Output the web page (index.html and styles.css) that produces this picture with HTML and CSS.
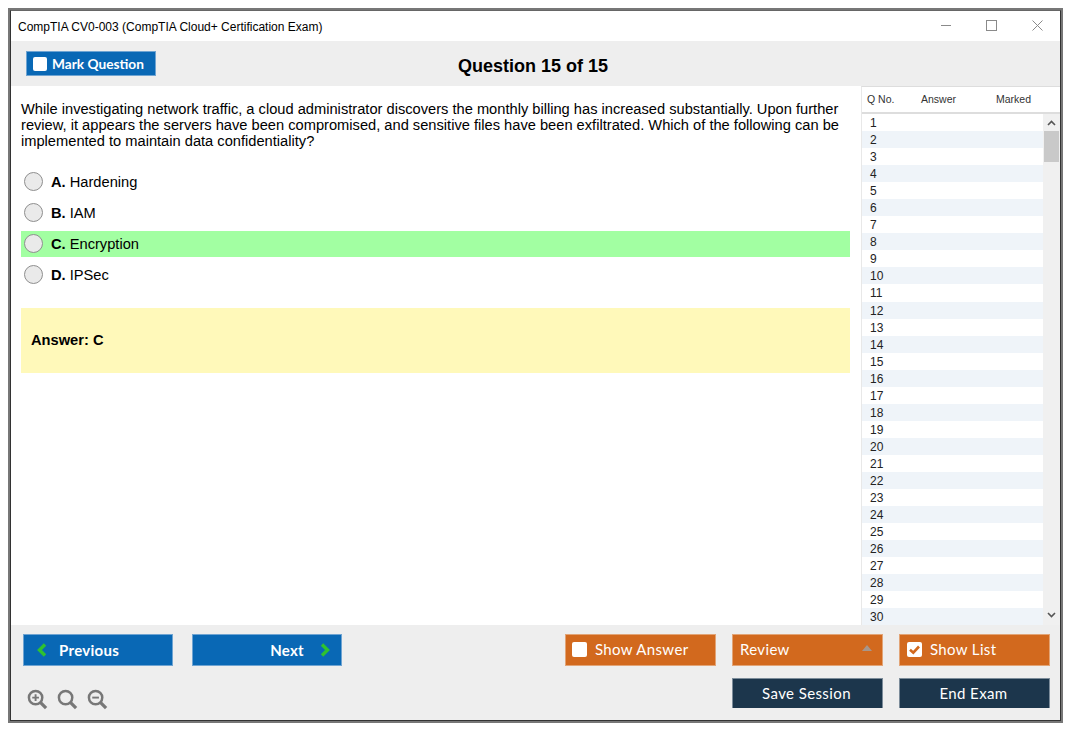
FILE: index.html
```html
<!DOCTYPE html>
<html lang="en">
<head>
<meta charset="utf-8">
<title>CompTIA CV0-003</title>
<link rel="stylesheet" href="styles.css">
</head>
<body>
<div class="window"><div class="frame">
  <header class="titlebar">
    <span class="title">CompTIA CV0-003 (CompTIA Cloud+ Certification Exam)</span>
    <div class="winctl">
      <svg class="ctl ctl-min" viewBox="0 0 10 11"><path d="M0 5.500H10" /></svg>
      <svg class="ctl" viewBox="0 0 11 11"><rect x="0.500" y="0.500" width="10" height="10" /></svg>
      <svg class="ctl" viewBox="0 0 11 11"><path d="M0.500 0.500L10.500 10.500M10.500 0.500L0.500 10.500" /></svg>
    </div>
  </header>
  <div class="toolbar">
    <button class="btn btn-blue mark"><span class="box"></span>Mark Question</button>
    <h1 class="qtitle">Question 15 of 15</h1>
  </div>
  <main class="content">
    <section class="question">
      <p class="qtext">While investigating network traffic, a cloud administrator discovers the monthly billing has increased substantially. Upon further review, it appears the servers have been compromised, and sensitive files have been exfiltrated. Which of the following can be implemented to maintain data confidentiality?</p>
      <div class="options">
        <div class="option"><span class="radio"></span><b>A.</b>&nbsp;Hardening</div>
        <div class="option"><span class="radio"></span><b>B.</b>&nbsp;IAM</div>
        <div class="option correct"><span class="radio"></span><b>C.</b>&nbsp;Encryption</div>
        <div class="option"><span class="radio"></span><b>D.</b>&nbsp;IPSec</div>
      </div>
      <div class="answer">Answer: C</div>
    </section>
    <aside class="side">
      <div class="side-head"><span class="c1">Q No.</span><span class="c2">Answer</span><span class="c3">Marked</span></div>
      <div class="side-body">
        <ol class="qlist" id="qlist"><li>1</li><li>2</li><li>3</li><li>4</li><li>5</li><li>6</li><li>7</li><li>8</li><li>9</li><li>10</li><li>11</li><li>12</li><li>13</li><li>14</li><li>15</li><li>16</li><li>17</li><li>18</li><li>19</li><li>20</li><li>21</li><li>22</li><li>23</li><li>24</li><li>25</li><li>26</li><li>27</li><li>28</li><li>29</li><li>30</li></ol>
        <div class="scrollbar">
          <svg class="arrow arrow-up" viewBox="0 0 9 6"><path d="M1 5L4.500 1.500L8 5" /></svg>
          <div class="track"><div class="thumb"></div></div>
          <svg class="arrow arrow-down" viewBox="0 0 9 6"><path d="M1 1L4.500 4.500L8 1" /></svg>
        </div>
      </div>
    </aside>
  </main>
  <footer class="footer">
    <div class="row row1">
      <button class="btn btn-blue nav prev"><svg class="chev" viewBox="0 0 10 14"><path d="M8 1.500L2.500 7L8 12.500" /></svg>Previous</button>
      <button class="btn btn-blue nav next">Next<svg class="chev" viewBox="0 0 10 14"><path d="M2 1.500L7.500 7L2 12.500" /></svg></button>
      <span class="grow"></span>
      <button class="btn btn-orange has-box"><span class="box"></span>Show Answer</button>
      <button class="btn btn-orange review">Review<span class="caret"></span></button>
      <button class="btn btn-orange show-list"><span class="box"><svg viewBox="0 0 15 15"><path d="M3 7.700L6.300 10.700L12 4.500" /></svg></span>Show List</button>
    </div>
    <div class="row row2">
      <div class="zooms">
        <svg class="zoom" viewBox="0 0 22 22"><circle cx="9" cy="9" r="7" /><path class="h" d="M14 14L20 20" /><path class="t" d="M5.500 9H12.500M9 5.500V12.500" /></svg>
        <svg class="zoom" viewBox="0 0 22 22"><circle cx="9" cy="9" r="7" /><path class="h" d="M14 14L20 20" /></svg>
        <svg class="zoom" viewBox="0 0 22 22"><circle cx="9" cy="9" r="7" /><path class="h" d="M14 14L20 20" /><path class="t" d="M5.500 9H12.500" /></svg>
      </div>
      <span class="grow"></span>
      <button class="btn btn-navy">Save Session</button>
      <button class="btn btn-navy">End Exam</button>
    </div>
  </footer>
</div></div>
</body>
</html>
```
FILE: styles.css
```css
* { box-sizing: border-box; }
html, body { margin: 0; padding: 0; background: #fff; }
body { padding: 8px 0 0 8px; font-family: "Liberation Sans", Arial, sans-serif; color: #000; }
.window { width: 1055px; height: 715px; border: 2px solid #777; }
.frame { height: 100%; border: 1px solid #333; border-top-color: #666; display: flex; flex-direction: column; background: #fff; }

.titlebar { height: 30px; flex: none; display: flex; align-items: center; justify-content: space-between; padding-left: 7px; background: #fff; }
.title { font-size: 12px; margin-top: 2px; }
.winctl { display: flex; gap: 35px; padding-right: 17px; margin-top: -1px; }
.ctl { width: 11px; height: 11px; fill: none; stroke: #8a8a8a; stroke-width: 1; }
.ctl-min { width: 10px; }

.toolbar { height: 45px; flex: none; background: #eee; display: flex; align-items: center; padding-left: 15px; }
.qtitle { margin: 0 0 0 302px; font-size: 18px; font-weight: bold; line-height: 22px; padding-top: 4px; height: 26px; }

.btn { border: 1px solid #8fb4d8; font-family: Lato, "Open Sans", sans-serif; color: #fff; display: flex; align-items: center; padding: 0; cursor: pointer; }
.btn-blue { background: #0968b5; border-color: #6fa4d2; font-weight: bold; }
.btn-orange { background: #d2691e; border-color: #e2a476; width: 151px; height: 32px; font-size: 15px; letter-spacing: 0.35px; padding: 0 0 2px 7px; }
.btn-orange.has-box { padding-left: 6px; }
.btn-navy { background: #1c364c; border-color: #7c8c9a; border-bottom: 0; width: 151px; height: 30px; font-size: 15px; letter-spacing: 0.4px; justify-content: center; padding: 0 2px 1px 0; }
.box { width: 15px; height: 15px; background: #fff; border-radius: 2px; margin-right: 8px; flex: none; display: block; }
.box svg { display: block; width: 15px; height: 15px; fill: none; stroke: #d2691e; stroke-width: 2.6; }

.mark { width: 130px; height: 25px; font-size: 13.700px; padding-left: 6px; }
.mark .box { width: 14px; height: 14px; margin-right: 5px; }

.content { flex: 1; min-height: 0; display: flex; background: #fff; }
.question { flex: 1; min-width: 0; padding: 15px 11px 0 10px; }
.qtext { margin: 0 0 20px; font-size: 14.670px; line-height: 16px; }
.options { display: flex; flex-direction: column; gap: 5px; }
.option { height: 26px; display: flex; align-items: center; font-size: 14.670px; padding-left: 3px; }
.correct { background: #a2ffa2; }
.radio { width: 19px; height: 19px; border-radius: 50%; background: #eaeaea; border: 1px solid #8f8f8f; margin: 0 8px 1px 0; flex: none; }
.answer { margin-top: 20px; height: 65px; background: #fff9ba; display: flex; align-items: center; padding: 0 0 2px 10px; font-size: 14.670px; font-weight: bold; }

.side { width: 199px; flex: none; display: flex; flex-direction: column; border-left: 1px solid #e8e8e8; border-top: 1px solid #ddd; }
.side-head { height: 27px; flex: none; border-bottom: 2px solid #ddd; display: flex; align-items: center; padding-bottom: 2px; font-size: 10.500px; color: #333; }
.c1 { width: 59px; padding-left: 5px; }
.c2 { width: 75px; }
.side-body { flex: 1; min-height: 0; display: flex; overflow: hidden; }
.qlist { list-style: none; margin: 0; padding: 0; flex: 1; min-width: 0; }
.qlist li { height: 17.060px; line-height: 19px; font-size: 12px; padding-left: 8px; color: #222; }
.qlist li:nth-child(even) { background: #eff4f9; }
.scrollbar { width: 17px; flex: none; background: #f0f0f0; display: flex; flex-direction: column; align-items: center; }
.arrow { width: 9px; height: 6px; flex: none; fill: none; stroke: #555; stroke-width: 1.6; }
.arrow-up { margin: 6px 0 5px; }
.arrow-down { margin: 5px 0 7px; }
.track { flex: 1; width: 100%; padding: 0 1px; }
.thumb { height: 31px; background: #c9c9c9; }

.footer { height: 95px; flex: none; background: #eee; padding: 9px 10px 0 12px; display: flex; flex-direction: column; gap: 12px; }
.row { display: flex; align-items: flex-start; }
.row1 { gap: 16px; }
.row2 { gap: 16px; }
.grow { flex: 1; }
.nav { width: 150px; height: 32px; font-size: 15px; letter-spacing: 0.3px; padding-bottom: 1px; }
.nav.prev { margin-right: 3px; padding-left: 13px; }
.nav.next { justify-content: flex-end; padding-right: 11px; }
.chev { width: 10px; height: 14px; fill: none; stroke: #2fc22f; stroke-width: 3.4; flex: none; }
.prev .chev { margin-right: 12px; }
.next .chev { margin-left: 16px; }
.review { justify-content: space-between; padding-right: 10px; }
.caret { width: 0; height: 0; border-left: 5.500px solid transparent; border-right: 5.500px solid transparent; border-bottom: 6px solid #a8968a; margin-bottom: 2px; }
.zooms { display: flex; gap: 9px; margin: 11px 0 0 4px; }
.zoom { width: 21px; height: 21px; fill: none; stroke: #777; stroke-width: 2.6; }
.zoom .h { stroke-width: 3.4; }
.zoom .t { stroke-width: 2; }
```
